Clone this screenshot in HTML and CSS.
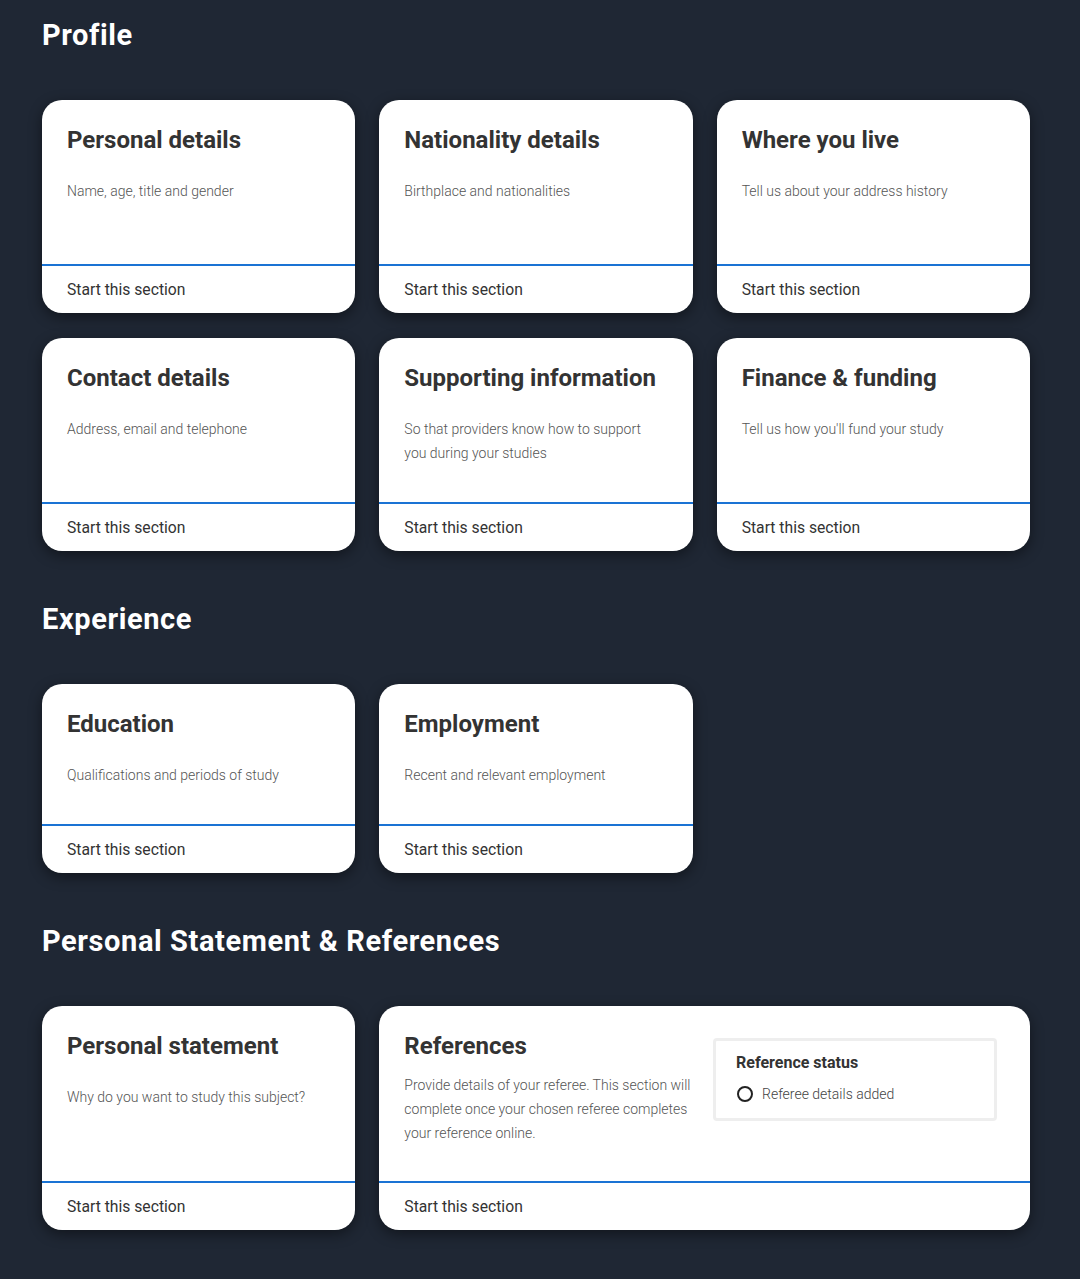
FILE: index.html
```html
<!DOCTYPE html>
<html lang="en">
<head>
<meta charset="utf-8">
<title>Application</title>
<link rel="stylesheet" href="styles.css">
</head>
<body>
<main class="page">
  <section class="group">
    <h2 class="group-title">Profile</h2>
    <div class="grid grid-tall">
      <article class="card">
        <div class="card-body"><h3 class="card-title">Personal details</h3><p class="card-desc">Name, age, title and gender</p></div>
        <div class="card-foot">Start this section</div>
      </article>
      <article class="card">
        <div class="card-body"><h3 class="card-title">Nationality details</h3><p class="card-desc">Birthplace and nationalities</p></div>
        <div class="card-foot">Start this section</div>
      </article>
      <article class="card">
        <div class="card-body"><h3 class="card-title">Where you live</h3><p class="card-desc">Tell us about your address history</p></div>
        <div class="card-foot">Start this section</div>
      </article>
      <article class="card">
        <div class="card-body"><h3 class="card-title">Contact details</h3><p class="card-desc">Address, email and telephone</p></div>
        <div class="card-foot">Start this section</div>
      </article>
      <article class="card">
        <div class="card-body"><h3 class="card-title">Supporting information</h3><p class="card-desc">So that providers know how to support you during your studies</p></div>
        <div class="card-foot">Start this section</div>
      </article>
      <article class="card">
        <div class="card-body"><h3 class="card-title">Finance &amp; funding</h3><p class="card-desc">Tell us how you'll fund your study</p></div>
        <div class="card-foot">Start this section</div>
      </article>
    </div>
  </section>

  <section class="group">
    <h2 class="group-title">Experience</h2>
    <div class="grid">
      <article class="card">
        <div class="card-body"><h3 class="card-title">Education</h3><p class="card-desc">Qualifications and periods of study</p></div>
        <div class="card-foot">Start this section</div>
      </article>
      <article class="card">
        <div class="card-body"><h3 class="card-title">Employment</h3><p class="card-desc">Recent and relevant employment</p></div>
        <div class="card-foot">Start this section</div>
      </article>
    </div>
  </section>

  <section class="group">
    <h2 class="group-title">Personal Statement &amp; References</h2>
    <div class="grid">
      <article class="card">
        <div class="card-body"><h3 class="card-title">Personal statement</h3><p class="card-desc">Why do you want to study this subject?</p></div>
        <div class="card-foot">Start this section</div>
      </article>
      <article class="card card-wide">
        <div class="card-body card-body-split">
          <div class="split-main">
            <h3 class="card-title">References</h3>
            <p class="card-desc card-desc-tight">Provide details of your referee. This section will complete once your chosen referee completes your reference online.</p>
          </div>
          <div class="status">
            <div class="status-title">Reference status</div>
            <div class="status-item">
              <svg class="status-icon" width="18" height="18" viewBox="0 0 18 18"><circle cx="9" cy="9" r="7" fill="none" stroke="#222" stroke-width="2"/></svg>
              <span>Referee details added</span>
            </div>
          </div>
        </div>
        <div class="card-foot">Start this section</div>
      </article>
    </div>
  </section>
</main>
</body>
</html>
```

FILE: styles.css
```css
html, body {
  margin: 0;
  padding: 0;
  background: #1f2734;
}
body {
  font-family: Roboto, "Noto Sans", "Liberation Sans", sans-serif;
  color: #333;
}
.page {
  padding: 18px 50px 48px 42px;
  display: flex;
  flex-direction: column;
  gap: 51px;
}
.group-title {
  margin: 0 0 48px;
  font-size: 29px;
  line-height: 34px;
  font-weight: 700;
  letter-spacing: 0.6px;
  color: #fff;
}
.grid {
  display: grid;
  grid-template-columns: repeat(3, 1fr);
  gap: 25px 24px;
}
.card {
  background: #fff;
  border-radius: 20px;
  box-shadow: 0 4px 14px rgba(0, 0, 0, 0.45);
  display: flex;
  flex-direction: column;
  overflow: hidden;
}
.card-wide {
  grid-column: span 2;
}
.card-body {
  flex: 1;
  padding: 26px 30px 36px 25px;
  min-height: 140px;
  box-sizing: border-box;
}
.grid-tall .card-body {
  min-height: 164px;
}
.card-title {
  margin: 0;
  font-size: 24px;
  line-height: 28px;
  font-weight: 700;
  color: #333;
}
.card-desc {
  margin: 25px 0 0;
  font-size: 14px;
  line-height: 24px;
  font-weight: 300;
  color: #555;
}
.card-desc-tight {
  margin-top: 13px;
}
.card-body-split {
  display: grid;
  grid-template-columns: 1fr 284px;
  gap: 14px;
  padding-right: 33px;
  align-items: start;
}
.status {
  margin-top: 6px;
  border: 3px solid #eeeeee;
  border-radius: 4px;
  padding: 11px 20px 14px 20px;
}
.status-title {
  font-size: 16px;
  line-height: 22px;
  font-weight: 700;
  color: #333;
}
.status-item {
  margin-top: 10px;
  display: flex;
  align-items: center;
  gap: 8px;
  font-size: 14px;
  line-height: 20px;
  font-weight: 300;
  color: #444;
}
.status-icon {
  flex: none;
}
.card-foot {
  border-top: 2px solid #1a73d4;
  height: 47px;
  padding-left: 25px;
  display: flex;
  align-items: center;
  font-size: 15.7px;
  color: #333;
}
```
